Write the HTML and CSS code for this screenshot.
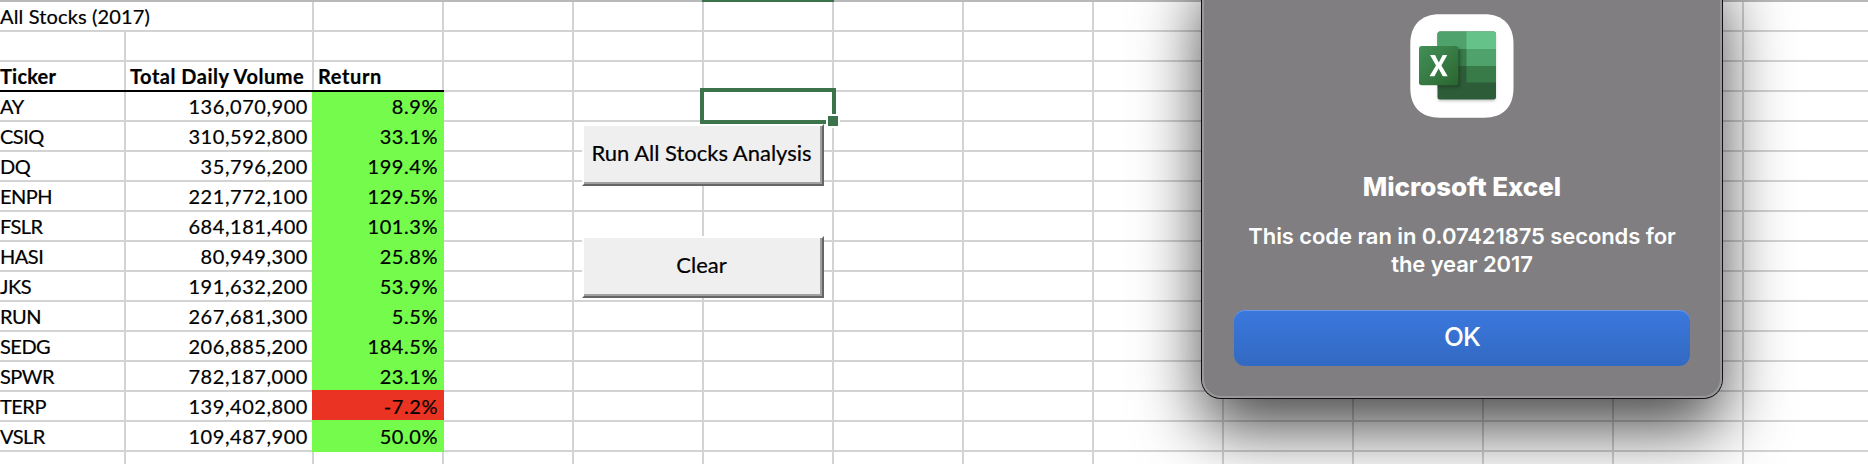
FILE: index.html
```
<!DOCTYPE html>
<html lang="en">
<head>
<meta charset="utf-8">
<title>All Stocks (2017)</title>
<link rel="stylesheet" href="styles.css">
</head>
<body>
<main class="workspace">
  <div class="sheet" id="sheet"></div>
  <div class="scroll-edge"></div>
  <div class="selection"><span class="fill-handle"></span></div>
  <button class="macro macro-run"><span>Run All Stocks Analysis</span></button>
  <button class="macro macro-clear"><span>Clear</span></button>

  <section class="dialog" role="dialog">
    <svg class="app-icon" viewBox="0 0 104 104">
      <defs>
        <linearGradient id="tile" x1="0" y1="0" x2="1" y2="1">
          <stop offset="0" stop-color="#43905a"/>
          <stop offset="1" stop-color="#2b662e"/>
        </linearGradient>
        <filter id="soft" x="-30%" y="-30%" width="160%" height="160%"><feGaussianBlur stdDeviation="1.8"/></filter>
        <clipPath id="book"><rect x="27.500" y="17.500" width="58.500" height="68" rx="2.500"/></clipPath>
      </defs>
      <path fill="#fff" d="M30 0.300H74C93 0.300 103.500 11 103.500 30V74C103.500 93 93 103.700 74 103.700H30C11 103.700 0.300 93 0.300 74V30C0.300 11 11 0.300 30 0.300Z"/>
      <rect x="28" y="19.500" width="57.500" height="67.500" rx="2.500" fill="#999" filter="url(#soft)" opacity=".6"/>
      <g clip-path="url(#book)">
        <rect x="27" y="17" width="60" height="70" fill="#2d5c39"/>
        <rect x="27" y="17" width="30" height="18" fill="#4fa26c"/>
        <rect x="56.500" y="17" width="30" height="18" fill="#65c288"/>
        <rect x="27" y="35" width="30" height="17" fill="#387b48"/>
        <rect x="56.500" y="35" width="30" height="17" fill="#4fa26c"/>
        <rect x="56.500" y="52" width="30" height="16.500" fill="#387b48"/>
        <rect x="12" y="35" width="38" height="38" fill="#12351c" filter="url(#soft)" opacity=".6"/>
      </g>
      <rect x="9" y="32" width="39.300" height="39.300" rx="2.800" fill="url(#tile)"/>
      <path fill="#fff" d="M20 41H25L28.800 48.500L32.700 41H37.300L31.400 51.500L37.700 62.300H32.800L28.600 54.500L24.400 62.300H19.500L26 51.600Z"/>
    </svg>
    <h1 class="dialog-title">Microsoft Excel</h1>
    <p class="dialog-text">This code ran in 0.07421875 seconds for<br>the year 2017</p>
    <button class="ok"><span>OK</span></button>
  </section>
</main>
<script src="sheet.js"></script>
</body>
</html>
```

FILE: styles.css
```
* { box-sizing: border-box; }
body { margin: 0; background: #fff; }
.workspace {
  position: relative;
  width: 1868px;
  height: 464px;
  overflow: hidden;
  font-family: Lato, Carlito, sans-serif;
  color: #000;
}
.sheet {
  display: grid;
  grid-template-columns: 126px 188px repeat(13, 130px);
  grid-auto-rows: 30px;
  padding-top: 2px;
  width: 2004px;
}
.cell {
  border-right: 2px solid #d3d3d3;
  border-bottom: 2px solid #d3d3d3;
  font-size: 20px;
  line-height: 28px;
  white-space: nowrap;
  -webkit-text-stroke: .2px;
}
.cell span { display: inline-block; }
.title { border-right: 0; letter-spacing: .15px; }
.ticker { letter-spacing: -.5px; }
.head {
  position: relative;
  z-index: 1;
  font-weight: 700;
  letter-spacing: .2px;
}
.head::after {
  content: "";
  position: absolute;
  left: 0;
  right: -2px;
  bottom: -2px;
  height: 2px;
  background: #000;
}
.head-volume { padding-left: 4px; letter-spacing: .5px; }
.head-return { padding-left: 4px; letter-spacing: .6px; }
.num {
  text-align: right;
  padding-right: 4px;
  letter-spacing: .55px;
}
.gain { background: #75fb4c; border-color: #75fb4c; box-shadow: -2px 0 #75fb4c, 0 -2px #75fb4c, -2px -2px #75fb4c; }
.loss { background: #eb3323; border-color: #eb3323; box-shadow: -2px 0 #eb3323, 0 -2px #eb3323, -2px -2px #eb3323; }
.scroll-edge {
  position: absolute;
  inset: 0 0 auto 0;
  height: 2px;
  background: linear-gradient(90deg, #b9b9b9 702px, #3b734a 702px, #3b734a 834px, #b9b9b9 834px);
}
.selection {
  position: absolute;
  left: 700px;
  top: 88px;
  width: 136px;
  height: 36px;
  border: 4px solid #3b734a;
}
.fill-handle {
  position: absolute;
  right: -6px;
  bottom: -6px;
  width: 10px;
  height: 10px;
  background: #3b734a;
  box-shadow: 0 0 0 2px #fff;
}
.macro {
  position: absolute;
  left: 582px;
  width: 242px;
  height: 62px;
  padding: 0 3px 5px 0;
  border: 2px solid;
  border-color: #fff #656565 #656565 #fff;
  background: #efefef;
  box-shadow: inset -2px -2px #a0a0a0;
  font: 22px Lato, Carlito, sans-serif;
  color: #000;
  white-space: nowrap;
  -webkit-text-stroke: .2px;
}
.macro-run { top: 124px; }
.macro-clear { top: 236px; }
.dialog {
  position: absolute;
  left: 1202px;
  top: -40px;
  width: 520px;
  height: 438px;
  padding: 54px 32px 0;
  border-radius: 19px;
  background: #807e80;
  box-shadow: inset 0 0 0 2px #98979a, 0 0 0 1px #111, 0 30px 66px rgba(0,0,0,.72);
  display: flex;
  flex-direction: column;
  align-items: center;
  font-family: Inter, sans-serif;
  color: #fff;
}
.app-icon { width: 104px; height: 104px; flex: none; }
.dialog-title {
  margin: 53px 0 0;
  font-size: 26px;
  line-height: 32px;
  font-weight: 800;
  letter-spacing: -.05px;
  white-space: nowrap;
}
.dialog-text {
  margin: 19px 0 0;
  font-size: 22px;
  line-height: 28px;
  font-weight: 600;
  letter-spacing: -.08px;
  text-align: center;
  white-space: nowrap;
}
.ok {
  width: 456px;
  height: 56px;
  margin: 32px 0 0;
  padding: 0 0 4px;
  border: 0;
  border-radius: 11px;
  background: linear-gradient(#3b78de, #3269c2);
  box-shadow: inset 0 1px #6797e6;
  font: 500 26px Inter, sans-serif;
  letter-spacing: -.8px;
  color: #fff;
}
```

FILE: sheet.js
```
const stocks = [
  ["AY", "136,070,900", "8.9%"],
  ["CSIQ", "310,592,800", "33.1%"],
  ["DQ", "35,796,200", "199.4%"],
  ["ENPH", "221,772,100", "129.5%"],
  ["FSLR", "684,181,400", "101.3%"],
  ["HASI", "80,949,300", "25.8%"],
  ["JKS", "191,632,200", "53.9%"],
  ["RUN", "267,681,300", "5.5%"],
  ["SEDG", "206,885,200", "184.5%"],
  ["SPWR", "782,187,000", "23.1%"],
  ["TERP", "139,402,800", "-7.2%"],
  ["VSLR", "109,487,900", "50.0%"]
];
const sheet = document.getElementById("sheet");
const addCell = (text, cls) => {
  const cell = document.createElement("div");
  cell.className = "cell " + (cls || "");
  if (text) {
    const span = document.createElement("span");
    span.textContent = text;
    cell.append(span);
  }
  sheet.append(cell);
};
const addRow = (cells) => {
  for (let i = 0; i < 15; i++) addCell(...(cells[i] || []));
};
addRow([["All Stocks (2017)", "title"]]);
addRow([]);
addRow([["Ticker", "head"], ["Total Daily Volume", "head head-volume"], ["Return", "head head-return"]]);
stocks.forEach(([ticker, volume, change]) =>
  addRow([[ticker, "ticker"], [volume, "num"], [change, "num " + (change[0] === "-" ? "loss" : "gain")]]));
addRow([]);
```
